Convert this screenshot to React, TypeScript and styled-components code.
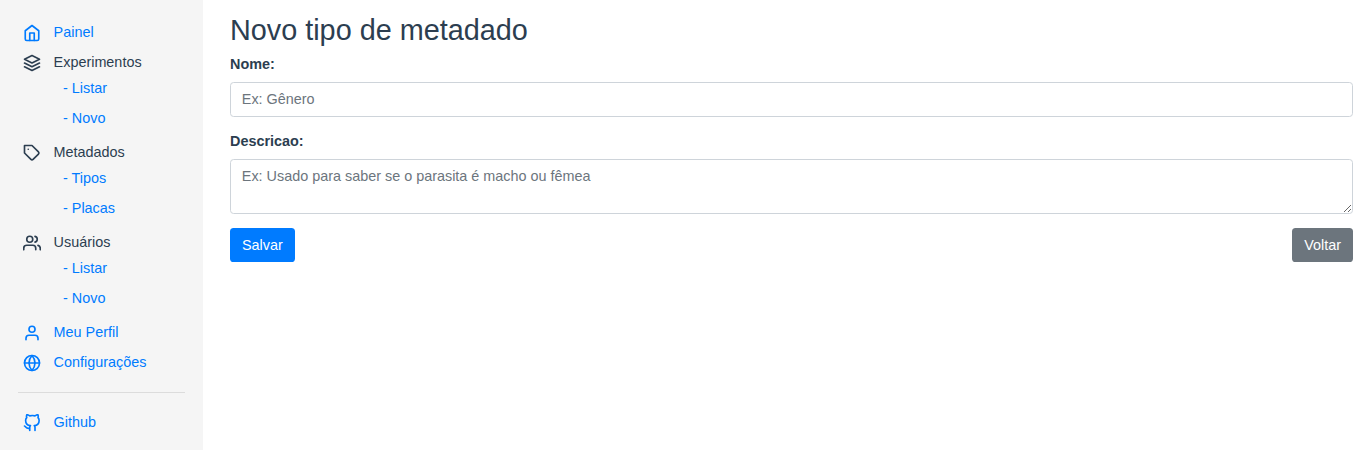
import React from 'react';
import styled, { createGlobalStyle } from 'styled-components';

const Global = createGlobalStyle`
  *, *::before, *::after { box-sizing: border-box; }
  body {
    margin: 0;
    font-family: "Liberation Sans", Arial, sans-serif;
    font-size: 14.4px;
    line-height: 1.5;
    color: #2c3e50;
    background: #fff;
    overflow: hidden;
  }
`;

const Layout = styled.div`
  display: flex;
  height: 450px;
`;

const Sidebar = styled.nav`
  width: 203px;
  flex: none;
  background: #f5f5f5;
  padding: 17px 18px 0;
`;

const NavItem = styled.a<{ $plain?: boolean }>`
  display: flex;
  align-items: center;
  height: 30px;
  line-height: 30px;
  padding-left: 5px;
  gap: 12.6px;
  color: ${p => (p.$plain ? '#2c3e50' : '#007bff')};
  text-decoration: none;
  cursor: pointer;

  svg { flex: none; margin-top: 1px; }
`;

const SubList = styled.div`
  display: flex;
  flex-direction: column;
  margin: -4px 0 4px;
  padding-left: 45px;
`;

const SubItem = styled.a`
  height: 30px;
  line-height: 30px;
  color: #007bff;
  text-decoration: none;
`;

const Divider = styled.hr`
  margin: 15px 0 14px;
  border: 0;
  border-top: 1px solid rgba(0, 0, 0, 0.1);
`;

const Main = styled.main`
  flex: 1;
  padding: 13px 12px 0 27px;
`;

const Title = styled.h1`
  margin: 0 0 7px;
  font-size: 28.8px;
  font-weight: 500;
  line-height: 34px;
`;

const Field = styled.div`
  display: flex;
  flex-direction: column;
  margin-bottom: 14px;
`;

const Label = styled.label`
  margin-bottom: 7px;
  font-weight: 700;
  line-height: 21px;
`;

const controlStyle = `
  display: block;
  width: 100%;
  border: 1px solid #ced4da;
  border-radius: 3.6px;
  background: #fff;
  color: #495057;
  font: 14.4px/1.5 "Liberation Sans", Arial, sans-serif;
  &::placeholder { color: #6c757d; opacity: 1; }
`;

const Input = styled.input`
  ${controlStyle}
  height: 35px;
  padding: 5px 10.8px 6px;
`;

const TextArea = styled.textarea`
  ${controlStyle}
  height: 55px;
  padding: 6px 10.8px 5px;
  resize: vertical;
  overflow: auto;
`;

const Actions = styled.div`
  display: flex;
  justify-content: space-between;
`;

const Button = styled.button<{ $color: string }>`
  height: 34px;
  padding: 0 11.9px;
  border: 0;
  border-radius: 3.6px;
  background: ${p => p.$color};
  color: #fff;
  font: 14.4px/22px "Liberation Sans", Arial, sans-serif;
`;

const shapes: Record<string, React.ReactNode> = {
  home: <><path d="M3 9l9-7 9 7v11a2 2 0 0 1-2 2H5a2 2 0 0 1-2-2z" /><polyline points="9 22 9 12 15 12 15 22" /></>,
  layers: <><polygon points="12 2 2 7 12 12 22 7 12 2" /><polyline points="2 17 12 22 22 17" /><polyline points="2 12 12 17 22 12" /></>,
  tag: <><path d="M20.59 13.41l-7.17 7.17a2 2 0 0 1-2.83 0L2 12V2h10l8.59 8.59a2 2 0 0 1 0 2.82z" /><line x1="7" y1="7" x2="7.01" y2="7" /></>,
  users: <><path d="M17 21v-2a4 4 0 0 0-4-4H5a4 4 0 0 0-4 4v2" /><circle cx="9" cy="7" r="4" /><path d="M23 21v-2a4 4 0 0 0-3-3.87" /><path d="M16 3.13a4 4 0 0 1 0 7.75" /></>,
  user: <><path d="M20 21v-2a4 4 0 0 0-4-4H8a4 4 0 0 0-4 4v2" /><circle cx="12" cy="7" r="4" /></>,
  globe: <><circle cx="12" cy="12" r="10" /><line x1="2" y1="12" x2="22" y2="12" /><path d="M12 2a15.3 15.3 0 0 1 4 10 15.3 15.3 0 0 1-4 10 15.3 15.3 0 0 1-4-10 15.3 15.3 0 0 1 4-10z" /></>,
  github: <path d="M9 19c-5 1.5-5-2.5-7-3m14 6v-3.87a3.37 3.37 0 0 0-.94-2.61c3.14-.35 6.44-1.54 6.44-7A5.44 5.44 0 0 0 20 4.77 5.07 5.07 0 0 0 19.91 1S18.73.65 16 2.48a13.38 13.38 0 0 0-7 0C6.27.65 5.09 1 5.09 1A5.07 5.07 0 0 0 5 4.77a5.44 5.44 0 0 0-1.5 3.78c0 5.42 3.3 6.61 6.44 7A3.37 3.37 0 0 0 9 18.13V22" />,
};

const Icon = ({ name }: { name: string }) => (
  <svg width="18" height="18" viewBox="0 0 24 24" fill="none" stroke="currentColor" strokeWidth="2.2" strokeLinecap="round" strokeLinejoin="round">
    {shapes[name]}
  </svg>
);

const menu = [
  { icon: 'home', text: 'Painel' },
  { icon: 'layers', text: 'Experimentos', items: ['Listar', 'Novo'] },
  { icon: 'tag', text: 'Metadados', items: ['Tipos', 'Placas'] },
  { icon: 'users', text: 'Usuários', items: ['Listar', 'Novo'] },
  { icon: 'user', text: 'Meu Perfil' },
  { icon: 'globe', text: 'Configurações' },
];

export default function App() {
  return (
    <>
      <Global />
      <Layout>
        <Sidebar>
          {menu.map(({ icon, text, items }) => (
            <React.Fragment key={text}>
              <NavItem $plain={!!items}><Icon name={icon} />{text}</NavItem>
              {items && (
                <SubList>
                  {items.map(item => <SubItem key={item}>- {item}</SubItem>)}
                </SubList>
              )}
            </React.Fragment>
          ))}
          <Divider />
          <NavItem><Icon name="github" />Github</NavItem>
        </Sidebar>
        <Main>
          <Title>Novo tipo de metadado</Title>
          <Field>
            <Label htmlFor="nome">Nome:</Label>
            <Input id="nome" placeholder="Ex: Gênero" />
          </Field>
          <Field>
            <Label htmlFor="descricao">Descricao:</Label>
            <TextArea id="descricao" placeholder="Ex: Usado para saber se o parasita é macho ou fêmea" />
          </Field>
          <Actions>
            <Button $color="#007bff">Salvar</Button>
            <Button $color="#6c757d">Voltar</Button>
          </Actions>
        </Main>
      </Layout>
    </>
  );
}
